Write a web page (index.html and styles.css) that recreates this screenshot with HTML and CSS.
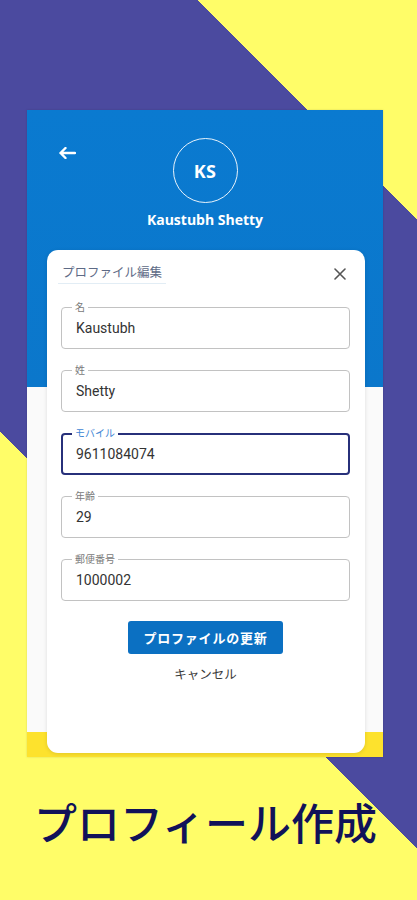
FILE: index.html
```html
<!DOCTYPE html>
<html lang="ja">
<head>
<meta charset="utf-8">
<title>プロフィール作成</title>
<link rel="stylesheet" href="styles.css">
</head>
<body>
<main class="page">
  <section class="phone">
    <header class="hero">
      <div class="hero-top">
        <svg class="back" width="18" height="12" viewBox="0 0 18 12" aria-hidden="true">
          <path d="M17 6H2.5M7.5 1L2.5 6l5 5" fill="none" stroke="#fff" stroke-width="2.4" stroke-linecap="round" stroke-linejoin="round"/>
        </svg>
        <div class="avatar">KS</div>
        <span></span>
      </div>
      <div class="name">Kaustubh Shetty</div>
    </header>

    <div class="card">
      <div class="card-head">
        <span class="card-title">プロファイル編集</span>
        <svg class="close" width="12" height="12" viewBox="0 0 12 12" aria-hidden="true">
          <path d="M1 1L11 11M11 1L1 11" stroke="#555" stroke-width="1.6" stroke-linecap="round"/>
        </svg>
      </div>

      <div class="fields">
        <div class="field"><span class="label">名</span><span class="value">Kaustubh</span></div>
        <div class="field"><span class="label">姓</span><span class="value">Shetty</span></div>
        <div class="field focused"><span class="label">モバイル</span><span class="value">9611084074</span></div>
        <div class="field"><span class="label">年齢</span><span class="value">29</span></div>
        <div class="field"><span class="label">郵便番号</span><span class="value">1000002</span></div>
      </div>

      <div class="actions">
        <button class="btn-primary">プロファイルの更新</button>
        <button class="btn-text">キャンセル</button>
      </div>
    </div>
  </section>

  <h1 class="caption">プロフィール作成</h1>
</main>
</body>
</html>
```

FILE: styles.css
```css
* { box-sizing: border-box; }

html, body {
  margin: 0;
  padding: 0;
}

body {
  width: 417px;
  height: 900px;
  overflow: hidden;
  font-family: "Noto Sans CJK JP", "Noto Sans", sans-serif;
  background: linear-gradient(45deg, #fffd68 0 331px, #4b4a9f 331px 776px, #fffd68 776px);
}

.page {
  display: flex;
  flex-direction: column;
  align-items: flex-start;
  padding-top: 110px;
}

.phone {
  margin-left: 27px;
  width: 356px;
  height: 647px;
  display: flex;
  flex-direction: column;
  background: linear-gradient(to bottom, #0a7ad0 0, #0b77cb 277px, #fafafa 277px, #fafafa 622px, #fde22d 622px);
  box-shadow: 0 0 2px rgba(0, 0, 0, 0.15);
}

.hero {
  display: flex;
  flex-direction: column;
  padding-top: 28px;
}

.hero-top {
  display: grid;
  grid-template-columns: 1fr 65px 1fr;
}

.back {
  align-self: start;
  margin-top: 9px;
  margin-left: 31px;
}

.avatar {
  width: 65px;
  height: 65px;
  border: 1.5px solid rgba(255, 255, 255, 0.9);
  border-radius: 50%;
  display: flex;
  align-items: center;
  justify-content: center;
  color: #fff;
  font-family: "Open Sans", sans-serif;
  font-weight: 700;
  font-size: 18px;
  letter-spacing: 0.3px;
}

.name {
  margin-top: 8px;
  height: 18px;
  line-height: 18px;
  text-align: center;
  color: #fff;
  font-family: "Open Sans", sans-serif;
  font-weight: 700;
  font-size: 14px;
}

.card {
  margin: 21px 0 0 20px;
  width: 318px;
  height: 503px;
  background: #fff;
  border-radius: 11px;
  box-shadow: 0 1px 4px rgba(0, 0, 0, 0.12);
  padding: 14px 15px 0 14px;
  display: flex;
  flex-direction: column;
}

.card-head {
  display: flex;
  align-items: center;
  justify-content: space-between;
  padding-right: 4px;
}

.card-title {
  margin-left: -3px;
  padding: 0 4px 3px;
  font-size: 12.5px;
  line-height: 16px;
  color: #5d6a86;
  border-bottom: 1px solid #e2edf5;
}

.fields {
  margin-top: 23px;
  display: flex;
  flex-direction: column;
  gap: 21px;
}

.field {
  position: relative;
  height: 42px;
  border: 1px solid #c2c2c2;
  border-radius: 4px;
  padding: 0 14px;
  display: flex;
  align-items: center;
}

.label {
  position: absolute;
  left: 10px;
  top: -8px;
  padding: 0 3px;
  background: #fff;
  font-size: 10px;
  line-height: 14px;
  color: #7a7a7a;
}

.value {
  font-family: Roboto, "Noto Sans", sans-serif;
  font-size: 14px;
  color: #333;
}

.field.focused {
  border: 2px solid #27307a;
  padding: 0 13px;
}

.field.focused .label {
  left: 9px;
  top: -9px;
  color: #3f86d4;
}

.actions {
  margin-top: 20px;
  display: flex;
  flex-direction: column;
  align-items: center;
}

.btn-primary {
  width: 155px;
  height: 33px;
  border: 0;
  border-radius: 3px;
  background: #0b70c2;
  color: #fff;
  font-family: "Noto Sans CJK JP", sans-serif;
  font-weight: 700;
  font-size: 13px;
  letter-spacing: 0.8px;
  padding: 0;
}

.btn-text {
  margin-top: 11px;
  border: 0;
  background: none;
  padding: 0;
  font-family: "Noto Sans CJK JP", sans-serif;
  font-size: 12.5px;
  line-height: 18px;
  color: #3a3a3a;
}

.caption {
  margin: 38px 0 0;
  width: 417px;
  padding-right: 6px;
  text-align: center;
  font-family: "Noto Sans CJK JP", sans-serif;
  font-weight: 500;
  font-size: 43px;
  line-height: 52px;
  color: #111259;
}
```
